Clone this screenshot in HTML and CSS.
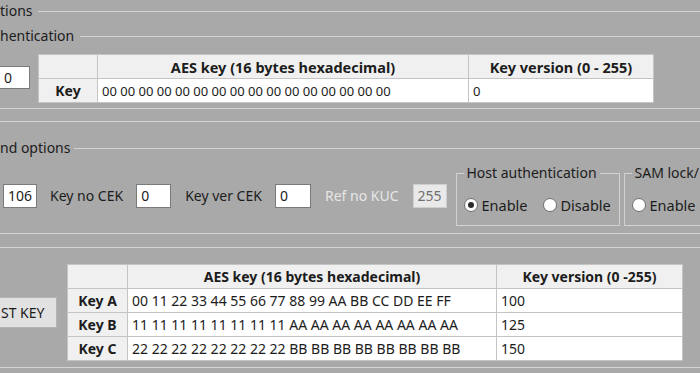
FILE: index.html
```html
<!DOCTYPE html>
<html lang="en">
<head>
    <meta charset="UTF-8">
    <meta name="viewport" content="width=device-width, initial-scale=1.0">
    <title>SAM options</title>

    <link rel="stylesheet" href="styles.css">
</head>
<body>

    <!-- Options / Authentication -->
    <div class="legend first"><span>tions</span><div class="rule"></div></div>
    <div class="legend second"><span>hentication</span><div class="rule"></div></div>

    <div class="auth-row">
        <input class="num edge" type="text" value="0">
        <table class="keys auth-keys">
            <tr>
                <th class="c1"></th>
                <th class="c2">AES key (16 bytes hexadecimal)</th>
                <th class="c3">Key version (0 - 255)</th>
            </tr>
            <tr>
                <th>Key</th>
                <td>00 00 00 00 00 00 00 00 00 00 00 00 00 00 00 00</td>
                <td>0</td>
            </tr>
        </table>
    </div>

    <div class="sep sep-a"></div>
    <div class="sep sep-b"></div>

    <!-- Command options -->
    <div class="legend third"><span>nd options</span><div class="rule"></div></div>

    <div class="cmd-row">
        <input class="num n106" type="text" value="106">
        <label class="lbl l1">Key no CEK</label>
        <input class="num n2" type="text" value="0">
        <label class="lbl l2">Key ver CEK</label>
        <input class="num n3" type="text" value="0">
        <label class="lbl disabled l3">Ref no KUC</label>
        <input class="num n4" type="text" value="255" disabled>

        <fieldset class="group host">
            <legend>Host authentication</legend>
            <div class="radios">
                <span class="radio checked"></span><span class="rtext">Enable</span>
                <span class="radio r2"></span><span class="rtext">Disable</span>
            </div>
        </fieldset>

        <fieldset class="group sam">
            <legend>SAM lock/</legend>
            <div class="radios">
                <span class="radio"></span><span class="rtext">Enable</span>
            </div>
        </fieldset>
    </div>

    <div class="sep sep-c"></div>
    <div class="sep sep-d"></div>

    <!-- Key entries -->
    <div class="keys-row">
        <button class="btn">ST KEY</button>
        <table class="keys entry-keys">
            <tr>
                <th class="c1"></th>
                <th class="c2">AES key (16 bytes hexadecimal)</th>
                <th class="c3">Key version (0 -255)</th>
            </tr>
            <tr>
                <th>Key A</th>
                <td>00 11 22 33 44 55 66 77 88 99 AA BB CC DD EE FF</td>
                <td>100</td>
            </tr>
            <tr>
                <th>Key B</th>
                <td>11 11 11 11 11 11 11 11 AA AA AA AA AA AA AA AA</td>
                <td>125</td>
            </tr>
            <tr>
                <th>Key C</th>
                <td>22 22 22 22 22 22 22 22 BB BB BB BB BB BB BB BB</td>
                <td>150</td>
            </tr>
        </table>
    </div>

    <div class="sep sep-e"></div>

</body>
</html>
```

FILE: styles.css
```css
/* База */
* {
    box-sizing: border-box;
}

body {
    margin: 0;
    width: 700px;
    height: 373px;
    overflow: hidden;
    background-color: #a9a9a9;
    font-family: "Noto Sans", "Open Sans", sans-serif;
    font-size: 14px;
    color: #1c1c1c;
}

/* Заголовки групп с линией */
.legend {
    display: flex;
    align-items: center;
    height: 20px;
    line-height: 20px;
    white-space: nowrap;
}

.legend.first {
    margin-top: 1px;
}

.legend.first .rule {
    margin-left: 5px;
}

.legend.second {
    margin-top: 5px;
}

.legend.second .rule {
    margin-left: 6px;
}

.legend.third {
    margin-top: 16px;
}

.legend.third .rule {
    margin-left: 4px;
}

.rule {
    flex: 1;
    height: 1px;
    background-color: #d5d5d5;
}

.sep {
    height: 1px;
    background-color: #d5d5d5;
}

.sep-a { margin-top: 5px; }
.sep-b { margin-top: 12px; }
.sep-c { margin-top: 7px; }
.sep-d { margin-top: 13px; }
.sep-e { margin-top: 6px; }

/* Поля ввода */
.num {
    height: 24px;
    padding: 0 4px;
    border: 1px solid #7a7a7a;
    background-color: #fff;
    font-family: inherit;
    font-size: 14px;
    color: #1c1c1c;
    outline: none;
}

.num:disabled {
    background-color: #e9e9e9;
    border-color: #cfcfcf;
    color: #707070;
}

/* Authentication */
.auth-row {
    display: flex;
    align-items: flex-start;
    margin-top: 8px;
}

.num.edge {
    width: 31px;
    height: 23px;
    margin-top: 12px;
    margin-left: -1px;
}

/* Таблицы ключей */
.keys {
    border-collapse: collapse;
    table-layout: fixed;
    background-color: #fff;
}

.keys th,
.keys td {
    height: 24px;
    padding: 0 4px;
    border: 1px solid #c4c4c4;
    white-space: nowrap;
    overflow: hidden;
}

.keys th {
    background-color: #f0f0f0;
    font-weight: bold;
    text-align: center;
}

.keys td {
    text-align: left;
    font-size: 13px;
}

.auth-keys {
    width: 615px;
    margin-left: 8px;
}

.auth-keys tr:first-child th {
    font-size: 14.5px;
}

.auth-keys .c1 { width: 59px; }
.auth-keys .c2 { width: 371px; }
.auth-keys .c3 { width: 185px; }

/* Command options */
.cmd-row {
    display: flex;
    align-items: center;
    height: 61px;
    margin-top: 7px;
    white-space: nowrap;
}

.num.n106 {
    width: 34px;
    margin-left: 3px;
}

.lbl {
    line-height: 20px;
}

.l1 { margin-left: 13px; }
.l2 { margin-left: 14px; }
.l3 { margin-left: 14px; }

.num.n2 { width: 35px; margin-left: 13px; }
.num.n3 { width: 36px; margin-left: 13px; }
.num.n4 { width: 34px; margin-left: 14px; }

.lbl.disabled {
    color: #e6e6e6;
}

/* Группы с радиокнопками */
.group {
    flex-shrink: 0;
    height: 61px;
    margin: 0;
    padding: 0 0 0 7px;
    border: 1px solid #d2d2d2;
}

.group legend {
    padding: 0 3px;
    margin-left: 0;
    line-height: 16px;
}

.host {
    width: 164px;
    margin-left: 9px;
}

.sam {
    width: 77px;
    margin-left: 4px;
    border-right: none;
}

.radios {
    display: flex;
    align-items: center;
    margin-top: 14px;
}

.radio {
    width: 14px;
    height: 14px;
    border: 1px solid #6e6e6e;
    border-radius: 50%;
    background-color: #fff;
    display: flex;
    align-items: center;
    justify-content: center;
}

.radio.checked::after {
    content: "";
    width: 6px;
    height: 6px;
    border-radius: 50%;
    background-color: #2a2a2a;
}

.rtext {
    margin-left: 4px;
    font-size: 14.5px;
}

.radio.r2 {
    margin-left: 15px;
}

/* Key entries */
.keys-row {
    display: flex;
    align-items: center;
    margin-top: 16px;
}

.btn {
    width: 58px;
    height: 31px;
    margin-left: -1px;
    padding: 0 0 0 1px;
    border: 1px solid #b4b4b4;
    background-color: #e1e1e1;
    font-family: inherit;
    font-size: 14px;
    color: #1c1c1c;
    text-align: left;
    white-space: nowrap;
}

.entry-keys {
    width: 615px;
    margin-left: 10px;
}

.entry-keys .c1 { width: 60px; }
.entry-keys .c2 { width: 369px; }
.entry-keys .c3 { width: 186px; }

.entry-keys td {
    font-size: 14px;
}
```
